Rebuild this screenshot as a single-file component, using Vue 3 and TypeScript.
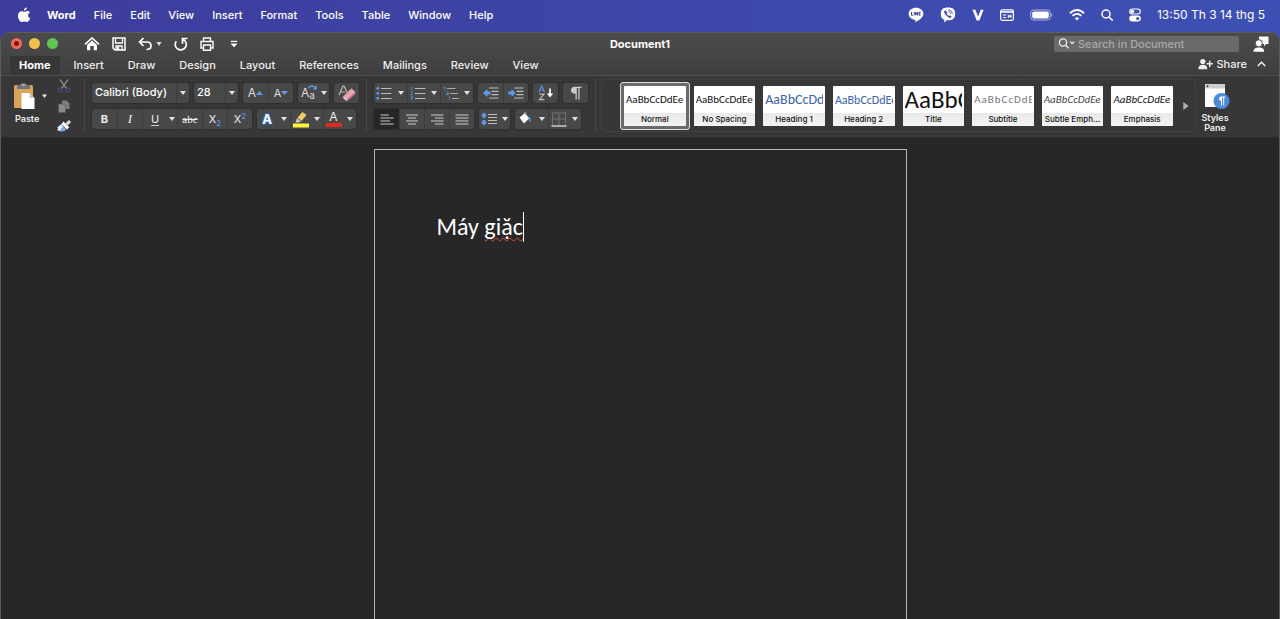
<script setup lang="ts">
import { ref } from 'vue'

interface StyleCard {
  name: string
  sample: string
  kind: string
}

const menus: string[] = ['Word', 'File', 'Edit', 'View', 'Insert', 'Format', 'Tools', 'Table', 'Window', 'Help']
const tabs: string[] = ['Home', 'Insert', 'Draw', 'Design', 'Layout', 'References', 'Mailings', 'Review', 'View']
const activeTab = ref('Home')
const activeStyle = ref('Normal')

const styleCards: StyleCard[] = [
  { name: 'Normal', sample: 'AaBbCcDdEe', kind: 'plain' },
  { name: 'No Spacing', sample: 'AaBbCcDdEe', kind: 'plain' },
  { name: 'Heading 1', sample: 'AaBbCcDd', kind: 'h1' },
  { name: 'Heading 2', sample: 'AaBbCcDdEe', kind: 'h2' },
  { name: 'Title', sample: 'AaBbC', kind: 'title' },
  { name: 'Subtitle', sample: 'AaBbCcDdEe', kind: 'sub' },
  { name: 'Subtle Emph...', sample: 'AaBbCcDdEe', kind: 'subtle' },
  { name: 'Emphasis', sample: 'AaBbCcDdEe', kind: 'emph' },
]
</script>

<template>
  <div class="desktop">
    <header class="menubar">
      <svg class="apple" width="14" height="16" viewBox="0 0 14 16" fill="#fff">
        <path d="M9.8 0.6C9.9 2.2 8.5 3.7 7 3.7C6.8 2.2 8.3 0.7 9.8 0.6ZM12.9 5.4C11.6 6.2 11.1 7.2 11.1 8.3C11.1 9.8 12 10.8 13.2 11.3C12.7 12.8 11.4 15 10 15C9.1 15 8.6 14.4 7.4 14.4C6.2 14.4 5.700 15 4.800 15C3 15 .9 11.800 .9 8.700C.9 5.900 2.700 4.200 4.600 4.200C5.700 4.200 6.500 4.900 7.300 4.900C8.100 4.900 9 4.100 10.300 4.100C11.400 4.100 12.300 4.600 12.900 5.400Z" />
      </svg>
      <nav class="menus">
        <button v-for="(m, i) in menus" :key="m" type="button" :class="{ app: i === 0 }">{{ m }}</button>
      </nav>
      <div class="status">
        <svg width="16" height="16" viewBox="0 0 16 16">
          <path d="M8 .8C3.900.8.6 3.400.6 6.800C.6 9.800 3.200 12.200 6.700 12.700C7.700 12.900 7.200 14.200 7.400 15.200C10 13.900 15.400 10.800 15.400 6.800C15.400 3.400 12.100.8 8 .8Z" fill="#fff" />
          <path d="M3.500 5V8.300H5M6.200 5V8.300M7.500 8.300V5L9.500 8.300V5M12.600 5.200H11V8.100H12.600M11 6.650H12.400" fill="none" stroke="#3d47a8" stroke-width="1" />
        </svg>
        <svg width="16" height="16" viewBox="0 0 16 16">
          <path d="M8 .5C3 .5.8 2.500.8 7C.8 10 1.800 12 4.300 12.800V15.500L6.900 13.300C12.500 13.600 15.200 11.600 15.200 7C15.200 2.500 13 .5 8 .5Z" fill="#fff" />
          <path d="M5.300 3.300C4.200 3.600 3.900 4.600 4.300 5.600C5.300 8 7 9.700 9.400 10.800C10.500 11.200 11.500 10.300 11.600 9.400L9.800 8.200L8.800 9C7.800 8.500 7 7.700 6.600 6.600L7.300 5.500Z" fill="#3d47a8" />
          <path d="M8.300 2.900C10.700 3 12.200 4.500 12.200 6.900M8.500 4.700C9.700 4.800 10.400 5.500 10.500 6.700" fill="none" stroke="#3d47a8" stroke-width=".9" />
        </svg>
        <svg width="12" height="12" viewBox="0 0 12 12"><path d="M.4.8H3.400L6.100 7.500L8.700.8H11.600L7.400 11.400H4.700Z" fill="#fff" /></svg>
        <svg width="14" height="12" viewBox="0 0 14 12" fill="none" stroke="#fff">
          <rect x=".6" y=".9" width="12.800" height="10.400" rx="1.500" stroke-width="1.200" /><path d="M1 3H13" stroke-width="1.600" /><path d="M2.800 6H6.200M2.800 8.600H6.200M8 5.500L11.300 9M11.300 5.500L8 9M7.500 7.200H11.800" />
        </svg>
        <svg width="23" height="12" viewBox="0 0 23 12">
          <rect x=".7" y="1" width="19.600" height="10" rx="3" fill="none" stroke="#aeb3e2" /><rect x="2.200" y="2.500" width="16.600" height="7" rx="1.800" fill="#fff" /><path d="M21.200 4.200C22.800 4.700 22.800 7.300 21.200 7.800Z" fill="#aeb3e2" />
        </svg>
        <svg width="16" height="12" viewBox="0 0 16 12" fill="none" stroke="#fff" stroke-width="1.800">
          <path d="M1 4.300C5-.1 11-.1 15 4.300M3.600 6.900C6.300 4.100 9.700 4.100 12.400 6.900" /><path d="M8 11.600L5.800 9.200C7 8 9 8 10.200 9.200Z" fill="#fff" stroke="none" />
        </svg>
        <svg width="12" height="12" viewBox="0 0 12 12" fill="none" stroke="#fff" stroke-width="1.500"><circle cx="5" cy="5" r="4" /><path d="M8 8L11.300 11.300" stroke-linecap="round" /></svg>
        <svg width="12" height="14" viewBox="0 0 12 14">
          <rect x=".7" y="1" width="10.600" height="5" rx="2.500" fill="none" stroke="#fff" stroke-width="1.200" /><circle cx="3.400" cy="3.500" r="1.800" fill="#fff" />
          <rect x=".2" y="7.500" width="11.600" height="6" rx="3" fill="#fff" /><circle cx="8.700" cy="10.500" r="1.600" fill="#3d4dae" />
        </svg>
        <time class="clock">13:50 Th 3 14 thg 5</time>
      </div>
    </header>

    <main class="window">
      <div class="titlebar">
        <div class="left">
          <div class="lights">
            <button type="button" class="close" aria-label="Close"></button>
            <button type="button" class="mini" aria-label="Minimize"></button>
            <button type="button" class="full" aria-label="Zoom"></button>
          </div>
          <div class="quick">
            <button type="button" aria-label="Home">
              <svg width="16" height="14" viewBox="0 0 16 14"><path d="M1 7.300L8 1L15 7.300" fill="none" stroke="#fff" stroke-width="1.600" /><path d="M3 8L8 3.600L13 8V13.300H9.700V9H6.300V13.300H3Z" fill="#fff" /></svg>
            </button>
            <button type="button" aria-label="Save">
              <svg width="14" height="14" viewBox="0 0 14 14"><path d="M1 1H13V13H3L1 11Z" fill="none" stroke="#fff" stroke-width="1.500" /><path d="M3.500 1V6H10.500V1M4 13V9H10V13" fill="none" stroke="#fff" stroke-width="1.300" /><rect x="5" y="10" width="2.200" height="3" fill="#fff" /></svg>
            </button>
            <button type="button" class="undo" aria-label="Undo">
              <svg width="14" height="14" viewBox="0 0 14 14" fill="none" stroke="#fff" stroke-width="1.700"><path d="M5.500 1L1.500 5L5.500 9M1.500 5H9C11.500 5 13 6.600 13 8.700C13 10.800 11.500 12.500 8.500 12.500" /></svg>
              <svg width="6" height="4" viewBox="0 0 6 4"><path d="M.5 0H5.500L3 4Z" fill="#ddd" /></svg>
            </button>
            <button type="button" aria-label="Repeat">
              <svg width="14" height="14" viewBox="0 0 14 14" fill="none" stroke="#fff" stroke-width="1.700"><path d="M2.300 4.200C.3 7 1.200 10.500 3.800 12C6.500 13.500 10 12.800 11.600 10C13 7.200 12 4 9 2.300M8.500 6.800V1.500H13.500" /></svg>
            </button>
            <button type="button" aria-label="Print">
              <svg width="14" height="14" viewBox="0 0 14 14" fill="none" stroke="#fff" stroke-width="1.400"><path d="M3.500 4V1H10.500V4M3.500 11H1V4.500H13V11H10.500" /><path d="M3.500 8H10.500V13.300H3.500Z" /></svg>
            </button>
            <button type="button" class="custom" aria-label="Customize toolbar">
              <svg width="8" height="8" viewBox="0 0 8 8" fill="#fff"><rect x=".8" y=".8" width="6.400" height="1.200" /><path d="M.5 3.500H7.500L4 7.300Z" /></svg>
            </button>
          </div>
        </div>
        <h1>Document1</h1>
        <div class="right">
          <label class="search">
            <svg width="18" height="11" viewBox="0 0 18 11" fill="none" stroke="#eee" stroke-width="1.300"><circle cx="5" cy="4.500" r="3.600" /><path d="M7.600 7.200L10.800 10.400M12.200 3.600L14.200 5.500L16.200 3.600" /></svg>
            <input type="text" placeholder="Search in Document" aria-label="Search in Document" />
          </label>
          <button type="button" aria-label="Account">
            <svg width="16" height="16" viewBox="0 0 16 16"><path d="M6 .5H15.500V8H13L11 10.500V8H6Z" fill="#fff" /><circle cx="5.800" cy="7.300" r="3.600" fill="#fff" stroke="#484848" /><path d="M.5 15.800C.5 12.600 2.500 11.400 5.800 11.400C9.200 11.400 11.200 12.600 11.200 15.800Z" fill="#fff" /></svg>
          </button>
        </div>
      </div>

      <div class="tabrow">
        <nav class="tabs">
          <button v-for="t in tabs" :key="t" type="button" :class="{ on: t === activeTab }" @click="activeTab = t">{{ t }}</button>
        </nav>
        <div class="share">
          <button type="button">
            <svg width="15" height="12" viewBox="0 0 15 12" fill="#eee"><circle cx="4.800" cy="3.500" r="2.600" /><path d="M.3 11.300C.3 8 1.800 6.800 4.800 6.800C7.800 6.800 9.300 8 9.300 11.300Z" /><path d="M8.700 5.100H11V2.800H12.500V5.100H14.800V6.600H12.500V8.900H11V6.600H8.700Z" /></svg>
            <span>Share</span>
          </button>
          <button type="button" aria-label="Collapse ribbon">
            <svg width="9" height="6" viewBox="0 0 9 6" fill="none" stroke="#eee" stroke-width="1.600"><path d="M.8 5L4.500 1.300L8.200 5" /></svg>
          </button>
        </div>
      </div>

      <section class="ribbon">
        <div class="clip">
          <button type="button" class="paste">
            <svg width="34" height="28" viewBox="0 0 34 28">
              <rect x="1" y="3" width="19" height="23" rx="1.500" fill="#d8a558" /><path d="M4 3H7C7 .5 14 .5 14 3H17V7H4Z" fill="#70757b" /><rect x="8.800" y="2" width="3.400" height="2" fill="#aaa" />
              <path d="M8.500 11H16.500L21.500 16V27H8.500Z" fill="#fff" /><path d="M16.500 11V16H21.500Z" fill="#c2c5cc" /><path d="M29 12.500H34L31.500 16Z" fill="#e8e8e8" />
            </svg>
            <span>Paste</span>
          </button>
          <div class="tools">
            <button type="button" aria-label="Cut"><svg width="14" height="14" viewBox="0 0 14 14" fill="none"><path d="M3 .5L9.500 9.500M11 .5L4.500 9.500" stroke="#858585" stroke-width="1.300" /><circle cx="3.200" cy="11" r="2" stroke="#43516b" stroke-width="1.300" /><circle cx="10.800" cy="11" r="2" stroke="#43516b" stroke-width="1.300" /></svg></button>
            <button type="button" aria-label="Copy"><svg width="12" height="13" viewBox="0 0 12 13"><path d="M4 .5H8.500L11.500 3.500V9H4Z" fill="#7c7c7c" /><path d="M.5 4H5L7.500 6.500V12.500H.5Z" fill="#898989" stroke="#555" stroke-width=".5" /></svg></button>
            <button type="button" aria-label="Format painter"><svg width="14" height="12" viewBox="0 0 14 12"><path d="M12 0L14 2L10.800 5.500L8.500 3.200Z" fill="#ddd" /><path d="M6.500 1.500L12.300 7.300L10 9.500L4.500 4Z" fill="#fff" /><path d="M4.200 4.300L9.500 9.600C7 12 4 12.200 0 10L1.500 9L.5 7.500Z" fill="#7fa8dc" /><path d="M4.200 4.300L6.200 6.300L2.500 10.700L0 10L1.500 9L.5 7.500Z" fill="#e8f0fa" /></svg></button>
          </div>
        </div>

        <div class="block">
          <div class="row">
            <label class="combo font"><select aria-label="Font"><option>Calibri (Body)</option></select><i class="caret"></i></label>
            <label class="combo size"><select aria-label="Font size"><option>28</option></select><i class="caret"></i></label>
            <div class="grp">
              <button type="button" class="b" aria-label="Grow font"><span class="ltr">A</span><svg width="7" height="4" viewBox="0 0 7 4"><path d="M0 4L3.500 0L7 4Z" fill="#5c9dec" /></svg></button>
              <button type="button" class="b" aria-label="Shrink font"><span class="ltr small">A</span><svg width="7" height="4" viewBox="0 0 7 4"><path d="M0 0L3.500 4L7 0Z" fill="#5c9dec" /></svg></button>
            </div>
            <div class="grp">
              <button type="button" class="n case" aria-label="Change case"><span class="ltr">A</span><span class="ltr tiny">a</span><svg width="9" height="6" viewBox="0 0 9 6"><path d="M.5 4.500C2 1.300 5 1.300 7 3.500" fill="none" stroke="#5c9dec" stroke-width="1.400" /><path d="M8.800 1V5.500H4.800Z" fill="#5c9dec" /></svg></button>
              <button type="button" class="c slim" aria-label="Case options"><i class="caret"></i></button>
            </div>
            <div class="grp">
              <button type="button" class="b erase" aria-label="Clear formatting"><svg width="18" height="17" viewBox="0 0 18 17"><path d="M1 10L5 1H6L9 7M2.500 7H7.500" fill="none" stroke="#bbb" stroke-width="1.200" /><path d="M5.500 11L13.500 3.200L17.500 7L9.500 14.500Z" fill="#e9a3ae" /><path d="M5.500 11L9.500 14.500L8.500 16L5 13Z" fill="#f6d0d6" /><path d="M9.500 14.500L17.500 7V9L9 16.300Z" fill="#c77886" /></svg></button>
            </div>
          </div>
          <div class="row">
            <div class="grp">
              <button type="button" class="b bold">B</button>
              <button type="button" class="b ital">I</button>
              <button type="button" class="b und"><span>U</span></button>
              <button type="button" class="c tight" aria-label="Underline options"><i class="caret"></i></button>
              <button type="button" class="b strike">abc</button>
              <button type="button" class="b xs">X<sub>2</sub></button>
              <button type="button" class="b xs">X<sup>2</sup></button>
            </div>
            <div class="grp">
              <button type="button" class="n glow">A</button>
              <button type="button" class="c" aria-label="Text effects options"><i class="caret"></i></button>
              <button type="button" class="n" aria-label="Highlight"><svg width="18" height="17" viewBox="0 0 18 17"><path d="M5 7L9 10.500L6.500 11.500H3.500Z" fill="#c8c8c8" /><path d="M5.500 6.500L10.500 1L14.500 4L9.500 10Z" fill="#f0cd6a" /><rect x="1" y="12.500" width="16" height="4" fill="#fdf43a" /></svg></button>
              <button type="button" class="c" aria-label="Highlight options"><i class="caret"></i></button>
              <button type="button" class="n ink"><span>A</span></button>
              <button type="button" class="c" aria-label="Font color options"><i class="caret"></i></button>
            </div>
          </div>
        </div>

        <div class="block">
          <div class="row">
            <div class="grp">
              <button type="button" class="n" aria-label="Bullets"><svg width="16" height="14" viewBox="0 0 16 14"><path d="M5 2.500H15.500M5 7.500H15.500M5 12.500H15.500" stroke="#bbb" stroke-width="1.200" /><g fill="#5c9dec"><circle cx="1.800" cy="2.300" r="1.400" /><circle cx="1.800" cy="7.300" r="1.400" /><circle cx="1.800" cy="12.300" r="1.400" /></g></svg></button>
              <button type="button" class="c" aria-label="Bullet options"><i class="caret"></i></button>
              <button type="button" class="n" aria-label="Numbering"><svg width="16" height="14" viewBox="0 0 16 14" fill="none"><path d="M5 2.500H15.500M5 7.500H15.500M5 12.500H15.500" stroke="#bbb" stroke-width="1.200" /><path d="M.8 1.500L2 .8V4M.6 5.500H2.300V7L.8 8.500H2.600M.6 10H2.400V13.300H.6M1 11.700H2.300" stroke="#4f86cc" stroke-width=".9" /></svg></button>
              <button type="button" class="c" aria-label="Numbering options"><i class="caret"></i></button>
              <button type="button" class="n" aria-label="Multilevel list"><svg width="16" height="14" viewBox="0 0 16 14" fill="none"><path d="M4 2.500H12.500M7 7.500H15M9 12.500H16" stroke="#aaa" stroke-width="1.200" /><path d="M.8 1.500L2 .8V4M3.500 6H5.300V8.800H3.500V7.500H5M6.500 10.500V13.500" stroke="#4f86cc" stroke-width="1" /></svg></button>
              <button type="button" class="c" aria-label="Multilevel options"><i class="caret"></i></button>
            </div>
            <div class="grp">
              <button type="button" class="b" aria-label="Decrease indent"><svg width="16" height="12" viewBox="0 0 16 12"><path d="M6 1H15.500M8.500 4.300H15.500M8.500 7.600H15.500M6 11H15.500" stroke="#bbb" stroke-width="1.200" /><path d="M0 6L4.500 2V4.500H7.500V7.500H4.500V10Z" fill="#5c9dec" /></svg></button>
              <button type="button" class="b" aria-label="Increase indent"><svg width="16" height="12" viewBox="0 0 16 12"><path d="M6 1H15.500M8.500 4.300H15.500M8.500 7.600H15.500M6 11H15.500" stroke="#bbb" stroke-width="1.200" /><path d="M7.500 6L3.500 2V4.500H.3V7.500H3.500V10Z" fill="#5c9dec" /></svg></button>
            </div>
            <div class="grp">
              <button type="button" class="b" aria-label="Sort"><svg width="16" height="16" viewBox="0 0 16 16" fill="none"><path d="M1 7L3.700.8L6.400 7M2 5H5.400" stroke="#5c8fdc" stroke-width="1.200" /><path d="M1.500 9.200H6L1.500 14.700H6.300" stroke="#bbb" stroke-width="1.200" /><path d="M12 3.500V10" stroke="#fff" stroke-width="1.700" /><path d="M8.800 8.500H15.200L12 12.500Z" fill="#fff" /></svg></button>
            </div>
            <div class="grp">
              <button type="button" class="b" aria-label="Show marks"><svg width="12" height="14" viewBox="0 0 12 14"><path d="M11.500.8H5C2.500.8 1 2.200 1 4.200C1 6.200 2.500 7.600 5 7.600H5.500V13.500H6.800V2H8.300V13.500H9.600V2H11.500Z" fill="#ccc" /></svg></button>
            </div>
          </div>
          <div class="row">
            <div class="grp">
              <button type="button" class="b pressed" aria-label="Align left"><svg width="14" height="11" viewBox="0 0 14 11"><path d="M.5 1H9M.5 4H13.500M.5 7H10M.5 10H13.500" stroke="#ccc" stroke-width="1.200" /></svg></button>
              <button type="button" class="b" aria-label="Center"><svg width="14" height="11" viewBox="0 0 14 11"><path d="M1 1H13M3 4H11M1 7H13M3 10H11" stroke="#ccc" stroke-width="1.200" /></svg></button>
              <button type="button" class="b" aria-label="Align right"><svg width="14" height="11" viewBox="0 0 14 11"><path d="M1 1H13.500M5 4H13.500M1 7H13.500M5 10H13.500" stroke="#ccc" stroke-width="1.200" /></svg></button>
              <button type="button" class="b" aria-label="Justify"><svg width="14" height="11" viewBox="0 0 14 11"><path d="M.5 1H13.500M.5 4H13.500M.5 7H13.500M.5 10H13.500" stroke="#ccc" stroke-width="1.200" /></svg></button>
            </div>
            <div class="grp">
              <button type="button" class="n" aria-label="Line spacing"><svg width="16" height="14" viewBox="0 0 16 14"><path d="M7 2.500H16M7 5.500H16M7 8.500H16M7 11.500H16" stroke="#bbb" stroke-width="1.200" /><path d="M3 .5L6.200 3.700H4.500V6H1.500V3.700H0ZM3 13.500L6.200 10.300H4.500V8H1.500V10.300H0Z" fill="#5c9dec" /></svg></button>
              <button type="button" class="c slim" aria-label="Line spacing options"><i class="caret"></i></button>
            </div>
            <div class="grp">
              <button type="button" class="n" aria-label="Shading"><svg width="14" height="16" viewBox="0 0 14 16"><path d="M6.200 6V2C6.200.6 8 .6 8 2V5" fill="none" stroke="#aaa" /><path d="M1.500 6.500L6.500 2.500L11.500 7L6 12.500Z" fill="#fff" /><path d="M10 5.500C12.500 6 13 8.500 12.300 11.500C11 10.500 11 9 10.800 7.800Z" fill="#5c9dec" /></svg></button>
              <button type="button" class="c" aria-label="Shading options"><i class="caret"></i></button>
              <button type="button" class="n" aria-label="Borders"><svg width="16" height="15" viewBox="0 0 16 15"><path d="M1.500 1H14.500V13M1.500 1V13M8 1V13M1.500 7H14.500" fill="none" stroke="#707070" /><path d="M.5 14H15.500" stroke="#ccc" stroke-width="1.400" /></svg></button>
              <button type="button" class="c" aria-label="Border options"><i class="caret"></i></button>
            </div>
          </div>
        </div>

        <div class="gallerywrap">
          <div class="gallery">
            <div class="cards">
              <button v-for="c in styleCards" :key="c.name" type="button" class="card" :class="{ on: c.name === activeStyle }" @click="activeStyle = c.name">
                <span class="face">
                  <span class="sample" :class="c.kind">{{ c.sample }}</span>
                  <span class="name">{{ c.name }}</span>
                </span>
              </button>
            </div>
            <button type="button" class="more" aria-label="More styles"><svg width="6" height="8" viewBox="0 0 6 8"><path d="M.3 0L5.700 4L.3 8Z" fill="#b0b0b0" /></svg></button>
          </div>
          <button type="button" class="pane">
            <svg width="26" height="28" viewBox="0 0 26 28"><rect x="1" y="1" width="20" height="23" rx="1" fill="#fff" /><rect x="1" y="1" width="20" height="4.500" fill="#ccd0d4" /><circle cx="3.500" cy="3.200" r="1" fill="#333" /><circle cx="17.500" cy="18" r="8" fill="#4a89dc" /><path d="M21 13.500H17C14.500 13.500 14.500 18 17 18V22.500H18V14.700H19.200V22.500H20.200V14.700H21Z" fill="#fff" /></svg>
            <span>Styles Pane</span>
          </button>
        </div>
      </section>

      <section class="canvas">
        <div class="page">
          <div class="text" role="textbox" aria-label="Document text" contenteditable="true" spellcheck="false">Máy <span class="typo">giặc</span><span class="cursor"></span></div>
        </div>
      </section>
    </main>
  </div>
</template>

<style>
body {
  margin: 0;
  background: #3e47a8;
}
</style>

<style scoped>
.desktop {
  min-height: 100vh;
  display: flex;
  flex-direction: column;
  font-family: Inter, "Liberation Sans", sans-serif;
  font-size: 11px;
  line-height: 14px;
  color: #eee;
  background: linear-gradient(90deg, #3d3c9c, #3e50b5);
}
* {
  box-sizing: border-box;
}
svg {
  display: block;
  flex: none;
}
button {
  font: inherit;
  color: inherit;
  background: none;
  border: 0;
  padding: 0;
  margin: 0;
  display: flex;
  align-items: center;
  justify-content: center;
  white-space: nowrap;
}
.menubar {
  height: 32px;
  display: flex;
  align-items: center;
  padding: 0 15px 2px 17px;
  color: #fff;
  font-weight: 500;
}
.menus {
  display: flex;
  gap: 18px;
  margin-left: 16px;
}
.menus .app {
  font-weight: 700;
}
.status {
  margin-left: auto;
  display: flex;
  align-items: center;
  gap: 16px;
}
.clock {
  font-size: 12px;
  font-weight: 400;
}
.window {
  flex: 1;
  display: flex;
  flex-direction: column;
  border: 1px solid #5c5c5e;
  border-bottom: 0;
  border-radius: 9px 9px 0 0;
  background: #272727;
  overflow: hidden;
}
.titlebar {
  height: 23px;
  display: grid;
  grid-template-columns: 1fr auto 1fr;
  align-items: center;
  padding-bottom: 2px;
  background: linear-gradient(#4b4b4b, #454545);
}
.titlebar h1 {
  margin: 0;
  font-size: 11px;
  font-weight: 700;
  color: #fff;
}
.left,
.lights,
.quick,
.right {
  display: flex;
  align-items: center;
}
.lights {
  gap: 7px;
  padding-left: 10px;
}
.lights button {
  width: 11px;
  height: 11px;
  border-radius: 50%;
}
.close {
  background: radial-gradient(circle, #7d1712 0 2px, #ec6a5e 3px);
}
.mini {
  background: #f4bf4f;
}
.full {
  background: #61c554;
}
.quick {
  gap: 12px;
  padding-left: 26px;
}
.undo {
  gap: 4px;
}
.custom {
  width: 16px;
}
.right {
  justify-content: flex-end;
  gap: 14px;
  padding-right: 10px;
}
.search {
  width: 185px;
  height: 16px;
  display: flex;
  align-items: center;
  gap: 2px;
  padding: 0 4px;
  border-radius: 2px;
  background: #6a6a6a;
}
.search input {
  min-width: 0;
  flex: 1;
  padding: 0;
  border: 0;
  outline: 0;
  background: none;
  font: inherit;
  font-weight: 500;
  color: #fff;
}
.search input::placeholder {
  color: #a9a9a9;
  opacity: 1;
}
.tabrow {
  height: 20px;
  display: flex;
  justify-content: space-between;
  background: linear-gradient(#454545, #3e3e3e);
  border-bottom: 1px solid #505050;
  font-weight: 500;
}
.tabs {
  display: flex;
  gap: 24px;
  padding-left: 9px;
}
.tabs button {
  height: 19px;
  padding-bottom: 2px;
}
.tabs .on {
  margin-right: -10px;
  padding: 0 9px 2px;
  font-weight: 700;
  color: #fff;
  background: #373737;
  border-radius: 2px 2px 0 0;
}
.share,
.share button {
  display: flex;
  gap: 4px;
}
.share {
  gap: 10px;
  padding: 0 13px 3px 0;
}
.ribbon {
  height: 62px;
  display: flex;
  padding-top: 3px;
  background: #373737;
  border-bottom: 1px solid #2d2d2d;
}
.clip {
  display: flex;
  width: 83px;
  padding-left: 12px;
  gap: 10px;
}
.paste {
  flex-direction: column;
  justify-content: flex-start;
  align-items: flex-start;
  gap: 3px;
  padding-top: 3px;
  font-size: 9px;
  line-height: 12px;
  font-weight: 600;
}
.paste span {
  margin-left: 2px;
}
.tools {
  display: flex;
  flex-direction: column;
  align-items: center;
  gap: 7px;
}
.block {
  display: flex;
  flex-direction: column;
  gap: 6px;
  height: 53px;
  padding: 4px 7px 0 7px;
  border-left: 1px solid #484848;
}
.row {
  display: flex;
  gap: 5px;
}
.grp,
.combo {
  display: flex;
  height: 20px;
  border-radius: 3px;
  background: #484848;
  box-shadow: 0 0 1px 1px #303030;
}
.grp button + button:not(.c) {
  border-left: 1px solid #3c3c3c;
}
.combo {
  align-items: center;
}
.combo select {
  flex: 1;
  min-width: 0;
  height: 20px;
  padding: 0 0 2px 3px;
  appearance: none;
  border: 0;
  border-right: 1px solid #3c3c3c;
  background: none;
  font: inherit;
  font-weight: 500;
  line-height: 18px;
  color: #fff;
}
.combo .caret {
  margin: 0 3px;
}
.font {
  width: 97px;
}
.size {
  width: 44px;
}
.caret {
  width: 0;
  height: 0;
  border: 3px solid transparent;
  border-top: 4px solid #e2e2e2;
  border-bottom: 0;
}
.b {
  width: 25px;
}
.n {
  width: 20px;
}
.c {
  width: 13px;
}
.slim {
  width: 11px;
}
.tight {
  width: 10px;
}
.ltr {
  font-size: 12px;
  color: #ddd;
}
.small {
  font-size: 11px;
}
.tiny {
  font-size: 10px;
  padding-top: 3px;
}
.case {
  position: relative;
}
.case svg {
  position: absolute;
  top: 1px;
  right: 1px;
}
.bold {
  font-weight: 700;
}
.ital {
  font-family: "Liberation Serif", serif;
  font-style: italic;
  font-size: 13px;
}
.und span {
  line-height: 12px;
  border-bottom: 1px solid #ccc;
}
.strike {
  font-family: "Liberation Serif", serif;
  text-decoration: line-through;
}
.xs sub,
.xs sup {
  font-size: 8px;
  line-height: 8px;
  color: #5c9dec;
}
.xs sub {
  align-self: flex-end;
  padding-bottom: 2px;
}
.xs sup {
  align-self: flex-start;
  padding-top: 3px;
}
.glow {
  font-size: 13px;
  font-weight: 700;
  color: #fff;
  text-shadow: 0 0 2px #2f76ea, 0 0 2px #2f76ea, 0 0 3px #2f76ea;
}
.ink span {
  width: 16px;
  line-height: 12px;
  font-size: 12px;
  border-bottom: 4px solid #dd2a1e;
}
.pressed {
  background: #262626;
}
.gallerywrap {
  flex: 1;
  min-width: 0;
  height: 53px;
  display: flex;
  padding-left: 5px;
  border-left: 1px solid #484848;
}
.gallery {
  flex: 1;
  min-width: 0;
  display: flex;
  align-items: center;
  padding-left: 18px;
  border: 1px solid #424242;
  border-radius: 3px;
}
.cards {
  flex: 1;
  min-width: 0;
  display: grid;
  grid-template-columns: repeat(8, minmax(0, 1fr));
}
.card {
  height: 48px;
  padding: 3px;
  border: 1px solid transparent;
  border-radius: 3px;
}
.card.on {
  border-color: #ddd;
  background: #6a6a6a;
}
.face {
  width: 100%;
  height: 40px;
  display: flex;
  flex-direction: column;
  overflow: hidden;
  border-radius: 1px;
  background: #fff;
  color: #111;
}
.sample {
  height: 27px;
  margin: 0 2px;
  overflow: hidden;
  text-align: left;
  font-family: Carlito, "Open Sans", sans-serif;
  font-size: 11px;
  line-height: 28px;
}
.h1 {
  color: #3a62ac;
  font-size: 14px;
}
.h2 {
  color: #3a62ac;
  font-size: 12px;
}
.title {
  font-size: 25px;
}
.sub {
  color: #777;
  letter-spacing: 1px;
}
.subtle,
.emph {
  font-style: italic;
}
.subtle {
  color: #444;
}
.name {
  flex: 1;
  font-size: 8px;
  line-height: 12px;
  font-weight: 500;
  background: linear-gradient(#e9e9e9, #f3f3f3);
}
.more {
  width: 18px;
}
.pane {
  width: 83px;
  flex-direction: column;
  align-items: flex-start;
  justify-content: flex-start;
  gap: 2px;
  padding: 4px 0 0 5px;
  font-size: 9px;
  line-height: 10px;
  font-weight: 600;
}
.pane svg {
  margin-left: 3px;
}
.pane span {
  width: 28px;
  white-space: normal;
  text-align: center;
}
.canvas {
  flex: 1;
  display: flex;
  justify-content: center;
  padding-top: 11px;
}
.page {
  width: 533px;
  border: 1px solid #b8b8b8;
  border-bottom: 0;
  padding: 61px 62px 0;
}
.text {
  display: flex;
  align-items: center;
  height: 31px;
  outline: 0;
  white-space: pre;
  font-family: Carlito, Lato, "Open Sans", sans-serif;
  font-size: 24px;
  line-height: 31px;
  color: #fff;
}
.typo {
  text-decoration: underline wavy #e0483e 1px;
  text-underline-offset: 2px;
  text-decoration-skip-ink: none;
}
.cursor {
  width: 1px;
  height: 30px;
  background: #fff;
}
</style>
